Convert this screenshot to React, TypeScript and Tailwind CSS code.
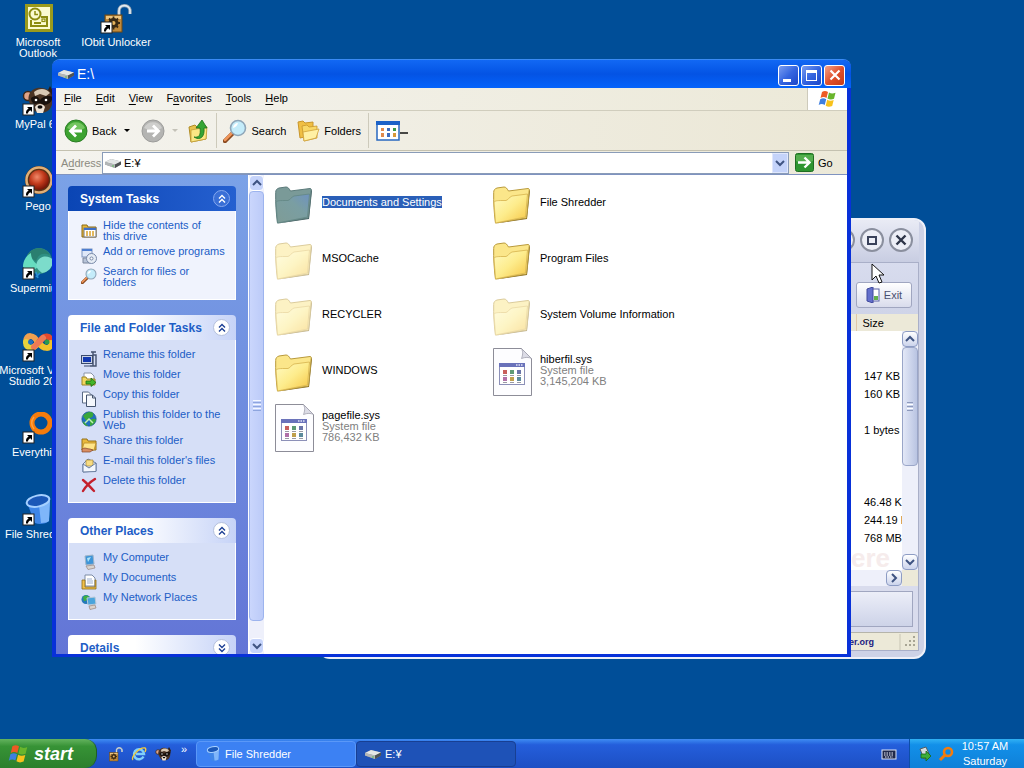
import type { ReactNode } from 'react';

/* ---------- desktop icons ---------- */

function ShortcutArrow() {
    return (
        <g>
            <rect x="1" y="20" width="11" height="11" fill="#fff" stroke="#222" strokeWidth="1" />
            <path d="M5 23h5v5l-1.7-1.7c-1.6 1-2.2 2-2.3 3.2H4c-.3-2.2.7-3.7 2.6-4.9z" fill="#000" />
        </g>
    );
}

function OutlookIcon() {
    return (
        <svg viewBox="0 0 32 32" className="w-8 h-8">
            <rect x="3" y="2" width="28" height="28" fill="#9a9a1c" />
            <rect x="6" y="5" width="22" height="22" fill="#fbfbd0" />
            <g fill="none" stroke="#8c8c10" strokeWidth="2">
                <circle cx="13" cy="12" r="5.5" />
                <path d="M13 9v3.5h3" strokeWidth="1.5" />
                <path d="M9 18v6h16v-9h-6" />
                <path d="M12 21h7" />
                <rect x="20" y="17" width="3" height="2.5" strokeWidth="1.2" />
            </g>
        </svg>
    );
}

function PadlockIcon({ shortcut = true, className = 'w-8 h-8' }: { shortcut?: boolean; className?: string }) {
    return (
        <svg viewBox="0 0 32 32" className={className}>
            <path d="M19 17V9c0-7 10-7 11-1v4" fill="none" stroke="#8fa0b0" strokeWidth="3.4" />
            <path d="M19 17V9c0-7 10-7 11-1v4" fill="none" stroke="#e4edf4" strokeWidth="1.6" />
            <rect x="5" y="13" width="17" height="17" fill="#c08a3c" stroke="#6c4712" />
            <path d="M6 14h15v3H6z" fill="#edc57e" />
            <circle cx="13.5" cy="21" r="5" fill="#3b2a14" />
            <path d="M13.5 14.5v13M7 21h13M9 16.5l9 9M18 16.5l-9 9" stroke="#3b2a14" strokeWidth="1.8" />
            <circle cx="13.5" cy="21" r="2" fill="#e7b35c" />
            {shortcut && <ShortcutArrow />}
        </svg>
    );
}

function RaccoonIcon({ shortcut = true, className = 'w-8 h-8' }: { shortcut?: boolean; className?: string }) {
    return (
        <svg viewBox="0 0 32 32" className={className}>
            <path d="M25 8l3-6 4 7-2 6z" fill="#2b1d14" />
            <circle cx="6" cy="12" r="4.500" fill="#e0a488" stroke="#3a271a" strokeWidth="1.5" />
            <path d="M7 11C10 3 19 2 26 6c6 4 6 15 1 20-5 4-13 4-16-1-2-4-6-8-4-14z" fill="#4b3424" />
            <path d="M12 8c5-4 12-4 16 1l-4 3-6-2-5 2z" fill="#d8c8b4" />
            <path d="M9 14c4-3 7-2 9 2 3-4 8-5 13-3-1 5-5 8-9 8l-4-2-5 1c-3-1-4-3-4-6z" fill="#19110d" />
            <circle cx="14" cy="16" r="1.300" fill="#fff" />
            <circle cx="24" cy="16" r="1.300" fill="#fff" />
            <path d="M13 23c2-4 8-4 10 0l-2 6h-6z" fill="#efe3d6" />
            <ellipse cx="18" cy="23" rx="2.500" ry="1.700" fill="#0e0a08" />
            {shortcut && <ShortcutArrow />}
        </svg>
    );
}

function PegoIcon() {
    return (
        <svg viewBox="0 0 32 32" className="w-8 h-8">
            <defs>
                <radialGradient id="pego" cx=".4" cy=".35" r=".7">
                    <stop offset="0" stopColor="#f08a6a" />
                    <stop offset=".5" stopColor="#c23a1c" />
                    <stop offset="1" stopColor="#6a0f05" />
                </radialGradient>
            </defs>
            <circle cx="17" cy="14" r="14" fill="#5b3216" />
            <circle cx="17" cy="14" r="12.500" fill="none" stroke="#e0b078" strokeWidth="2.500" />
            <circle cx="17" cy="14" r="10" fill="url(#pego)" />
            <ShortcutArrow />
        </svg>
    );
}

function SupermiumIcon() {
    return (
        <svg viewBox="0 0 32 32" className="w-8 h-8">
            <circle cx="17" cy="13" r="13" fill="#2f8f83" />
            <path d="M5 8C9-1 22-3 28 7c-8-3-12 0-14 6z" fill="#2a7f70" />
            <path d="M1 19C1 12 5 7 9 5c0 6 3 9 8 13-4 5-12 5-16 1z" fill="#66ddc0" />
            <path d="M15 14c4-8 13-6 16-2 0 8-5 12-11 13-4-3-7-6-5-11z" fill="#7cdccb" />
            <path d="M14 24l2 6M18 25l-4 4" stroke="#2c8fd0" strokeWidth="1.5" />
            <ShortcutArrow />
        </svg>
    );
}

function VisualStudioIcon() {
    return (
        <svg viewBox="0 0 32 32" className="w-8 h-8">
            <g fill="none" strokeLinecap="round" strokeWidth="6">
                <path d="M16 13C12 4 4 4 4 12" stroke="#f0a050" />
                <path d="M4 12c0 8 8 7 12 1" stroke="#e8d23c" />
                <path d="M17 12c5-8 12-7 12 1" stroke="#e64a2c" />
                <path d="M29 13c0 7-8 6-12 0" stroke="#f2c22a" />
                <path d="M12 17l9-9" stroke="#ef7a55" />
            </g>
            <circle cx="8.500" cy="12" r="2.500" fill="#1e6fc0" />
            <circle cx="25" cy="12" r="2.500" fill="#2f9a4a" />
            <ShortcutArrow />
        </svg>
    );
}

function EverythingIcon() {
    return (
        <svg viewBox="0 0 32 32" className="w-8 h-8">
            <circle cx="19" cy="11" r="9" fill="none" stroke="#f57c0c" strokeWidth="5" />
            <path d="M12 17a9 9 0 0 1 0-12" fill="none" stroke="#ffa040" strokeWidth="1.5" />
            <ShortcutArrow />
        </svg>
    );
}

function BinIcon({ shortcut = true, className = 'w-8 h-8' }: { shortcut?: boolean; className?: string }) {
    return (
        <svg viewBox="0 0 32 32" className={className}>
            <path d="M5 9l8 20c4 2 11 1 14-2L28 5z" fill="#3f86e8" />
            <path d="M17 11l2 18c4 0 7-1 8-2L28 7z" fill="#7fb6fa" />
            <ellipse cx="16" cy="7" rx="11.500" ry="5.500" transform="rotate(-12 16 7)" fill="#1b58b8" stroke="#a6d0ff" strokeWidth="2" />
            {shortcut && <ShortcutArrow />}
        </svg>
    );
}

/* ---------- small shared icons ---------- */

function DriveIcon() {
    return (
        <svg viewBox="0 0 16 16" className="w-4 h-4 shrink-0">
            <path d="M0 7l6-3 10 2.500v3L10 13 0 9.500z" fill="#8b8f92" />
            <path d="M0 7l6-3 10 2.500-6 3z" fill="#e3e6e6" />
            <path d="M0 7l10 2.500V13L0 9.500z" fill="#b3b7b8" />
            <path d="M10 9.500l6-3v3L10 13z" fill="#4e5254" />
            <circle cx="8" cy="11" r=".8" fill="#4fc04a" />
        </svg>
    );
}

function WindowsFlag({ className }: { className: string }) {
    return (
        <svg viewBox="0 0 20 20" className={className}>
            <path d="M4 3c2-1.3 4-1.2 6 0L8.500 9c-2-1.2-4-1.2-6 0z" fill="#ee5a24" />
            <path d="M11 3.500c2 1.2 4 1.3 6.500.2L16 9.700c-2.200 1-4.400 1-6.500-.2z" fill="#69b52c" />
            <path d="M2.200 10.200c2-1.2 4-1.2 6 0L6.700 16c-2-1.2-4-1.2-6 .1z" fill="#3f7fe0" />
            <path d="M9.200 10.700c2 1.200 4.300 1.200 6.500.2l-1.500 6c-2.300 1-4.500 1-6.500-.2z" fill="#f8c21c" />
        </svg>
    );
}

function MagnifierIcon({ className }: { className: string }) {
    return (
        <svg viewBox="0 0 24 24" className={className}>
            <path d="M2 22l8-8" stroke="#8a4a20" strokeWidth="4.500" strokeLinecap="round" />
            <path d="M2 21l7-7" stroke="#f0965a" strokeWidth="2.500" strokeLinecap="round" />
            <circle cx="15" cy="9" r="7.500" fill="#c4ecfa" stroke="#8fa6b8" strokeWidth="1.600" />
            <path d="M10 9a5 5 0 0 1 5-5c-1 3-2 4-5 5z" fill="#fff" />
        </svg>
    );
}

function Chevron({ dir, className = 'w-2.5 h-2.5' }: { dir: 'up' | 'down' | 'right'; className?: string }) {
    const d = dir === 'up' ? 'M1 7l4-4 4 4' : dir === 'down' ? 'M1 3l4 4 4-4' : 'M3 1l4 4-4 4';
    return (
        <svg viewBox="0 0 10 10" className={className}>
            <path d={d} fill="none" stroke="#3f5482" strokeWidth="2" />
        </svg>
    );
}

/* ---------- task pane icons ---------- */

const taskIcons: Record<string, ReactNode> = {
    hide: (
        <>
            <path d="M1 3h5l1 2h8v10H1z" fill="#e8b83a" stroke="#8a6a14" />
            <rect x="3" y="6" width="12" height="9" fill="#fff" stroke="#777" />
            <path d="M3 6h12v2H3z" fill="#3f6fc8" />
            <path d="M6 9v5M9 9v5M12 9v5" stroke="#d8a028" strokeWidth="1.500" />
        </>
    ),
    programs: (
        <>
            <rect x="1" y="1" width="10" height="8" fill="#dfe8f8" stroke="#7b93bd" />
            <path d="M1 1h10v2H1z" fill="#4f7fd0" />
            <path d="M2 10h7v5H2z" fill="#b8c4d8" stroke="#7a869c" />
            <circle cx="10.500" cy="10.500" r="5" fill="#e6ecf4" stroke="#7889a8" />
            <circle cx="10.500" cy="10.500" r="1.500" fill="#fff" stroke="#7889a8" />
        </>
    ),
    rename: (
        <>
            <rect x=".5" y="4.500" width="11" height="8" fill="#c9d2e4" stroke="#39496b" />
            <rect x="2" y="6" width="8" height="5" fill="#1238b0" />
            <path d="M9 15h6V4h-3V1M15 1h-5M12 4v11" fill="none" stroke="#44526e" strokeWidth="1.400" />
            <path d="M3 15h6" stroke="#39496b" />
        </>
    ),
    move: (
        <>
            <path d="M3 2h7l3 3v7H3z" fill="#fff" stroke="#8a94a6" />
            <path d="M1 6h4l1 2h8v6H1z" fill="#f3d75e" stroke="#9c8424" />
            <path d="M5 10h5V7l5 4.500-5 4V13H5z" fill="#43b52a" stroke="#1b6c10" strokeWidth=".8" />
        </>
    ),
    copy: (
        <>
            <path d="M1.500 1h6l3 3v8h-9z" fill="#fff" stroke="#5b6b84" />
            <path d="M5.500 4h6l3 3v8.500h-9z" fill="#f4f7fc" stroke="#45546e" />
            <path d="M11.500 4v3h3" fill="none" stroke="#45546e" />
        </>
    ),
    publish: (
        <>
            <circle cx="8" cy="8" r="7.200" fill="#1f6ec0" stroke="#16507a" strokeWidth=".6" />
            <path d="M2 5c3-4 8-5 10-3 1 3-1 5-4 5-1 3-3 3-4 1zM9 9c3-2 6-1 6 0-1 3-3 5-6 6zM2 10l5 5c-3 0-5-2-5-5z" fill="#3aa63a" />
            <path d="M4 12l4-4 4 4" fill="none" stroke="#bff0b0" strokeWidth="1.500" />
        </>
    ),
    share: (
        <>
            <path d="M1 2h5l1 2h8v9H1z" fill="#e9b93c" stroke="#94701a" />
            <path d="M3 6h12l-2 7H1z" fill="#ffe588" stroke="#b88a24" strokeWidth=".8" />
            <path d="M1 12c3-2 5 0 8 0l3 1-3 2H1z" fill="#d98e62" stroke="#7e4428" strokeWidth=".7" />
        </>
    ),
    mail: (
        <>
            <path d="M2 7l5-5 8 4v8l-13 1z" fill="#dfe8f4" stroke="#6b7fa0" />
            <path d="M5 3h7v6H5z" fill="#f8dc82" stroke="#a08438" strokeWidth=".7" />
            <path d="M2 7l6 4 7-5v8.500L2 15z" fill="#f3f7fd" stroke="#6b7fa0" />
        </>
    ),
    delete: (
        <path d="M2 3c4 3 7 7 11 11M14 2C9 5 5 9 2 14" fill="none" stroke="#c4202c" strokeWidth="2.400" strokeLinecap="round" />
    ),
    computer: (
        <>
            <path d="M4 2l8-1 1 9-8 1z" fill="#3d94d8" stroke="#9fb4c8" />
            <path d="M6 4l4-1-3 5z" fill="#aee4f8" />
            <path d="M5 12l8-1 1 3-7 1.500z" fill="#d8d4d0" stroke="#95857f" strokeWidth=".7" />
        </>
    ),
    documents: (
        <>
            <path d="M4 1h7l3 3v8H4z" fill="#fff" stroke="#7d8ca6" />
            <path d="M1 6h3v7h10V6h1v9H1z" fill="#f1c04a" stroke="#8d6d18" strokeWidth=".8" />
            <path d="M6 5h5M6 7h6M6 9h6" stroke="#9db0d0" />
        </>
    ),
    network: (
        <>
            <circle cx="5" cy="5.500" r="4.500" fill="#2579b8" />
            <path d="M2 3c2-2 5-2 6 0 0 2-3 4-5 4z" fill="#3faf43" />
            <path d="M6 4l8-1 1 7-8 1z" fill="#4aa4dc" stroke="#b6c8d8" />
            <path d="M8 12l6-1 1 3-6 1.500z" fill="#dcd3cc" stroke="#97857d" strokeWidth=".7" />
        </>
    ),
};

function TaskIcon({ name }: { name: string }) {
    if (name === 'search') return <MagnifierIcon className="w-4 h-4 mt-0.5 -mb-0.5 shrink-0" />;
    return <svg viewBox="0 0 16 16" className="w-4 h-4 mt-0.5 -mb-0.5 shrink-0">{taskIcons[name]}</svg>;
}

/* ---------- data ---------- */

const desktopItems = [
    { lines: ['Microsoft', 'Outlook'], icon: <OutlookIcon /> },
    { lines: ['MyPal 68'], icon: <RaccoonIcon /> },
    { lines: ['Pego'], icon: <PegoIcon /> },
    { lines: ['Supermium'], icon: <SupermiumIcon /> },
    { lines: ['Microsoft Visual', 'Studio 2008'], icon: <VisualStudioIcon /> },
    { lines: ['Everything'], icon: <EverythingIcon /> },
    { lines: ['File Shredder'], icon: <BinIcon /> },
];

const menus = ['File', 'Edit', 'View', 'Favorites', 'Tools', 'Help'];
const menuKeys = [0, 0, 0, 1, 0, 0];

const systemTasks = [
    { icon: 'hide', label: 'Hide the contents of\nthis drive' },
    { icon: 'programs', label: 'Add or remove programs' },
    { icon: 'search', label: 'Search for files or\nfolders' },
];

const folderTasks = [
    { icon: 'rename', label: 'Rename this folder' },
    { icon: 'move', label: 'Move this folder' },
    { icon: 'copy', label: 'Copy this folder' },
    { icon: 'publish', label: 'Publish this folder to the\nWeb' },
    { icon: 'share', label: 'Share this folder' },
    { icon: 'mail', label: "E-mail this folder's files" },
    { icon: 'delete', label: 'Delete this folder' },
];

const places = [
    { icon: 'computer', label: 'My Computer' },
    { icon: 'documents', label: 'My Documents' },
    { icon: 'network', label: 'My Network Places' },
];

interface Entry {
    name: string;
    kind: 'folder' | 'hidden' | 'selected' | 'file';
    size?: string;
}

const entries: Entry[] = [
    { name: 'Documents and Settings', kind: 'selected' },
    { name: 'File Shredder', kind: 'folder' },
    { name: 'MSOCache', kind: 'hidden' },
    { name: 'Program Files', kind: 'folder' },
    { name: 'RECYCLER', kind: 'hidden' },
    { name: 'System Volume Information', kind: 'hidden' },
    { name: 'WINDOWS', kind: 'folder' },
    { name: 'hiberfil.sys', kind: 'file', size: '3,145,204 KB' },
    { name: 'pagefile.sys', kind: 'file', size: '786,432 KB' },
];

const sizes = ['', '', '147 KB', '160 KB', '', '1 bytes', '', '', '', '46.48 KB', '244.19 KB', '768 MB'];

/* ---------- pieces ---------- */

function DesktopIcon({ lines, icon }: { lines: string[]; icon: ReactNode }) {
    return (
        <button className="w-[76px] h-[82px] pt-0.5 flex flex-col items-center text-white text-[11px] leading-[11px]">
            {icon}
            <span className="mt-[3px] whitespace-nowrap">
                {lines.map((line) => (
                    <span key={line} className="block">{line}</span>
                ))}
            </span>
        </button>
    );
}

function FolderIcon({ kind }: { kind: Entry['kind'] }) {
    const selected = kind === 'selected';
    return (
        <svg viewBox="0 0 40 48" className={`w-10 h-12 shrink-0 ${kind === 'hidden' ? 'opacity-50' : ''}`}>
            <defs>
                <linearGradient id="folderFront" x1="0" y1="0" x2="1" y2="1">
                    <stop offset="0" stopColor="#fffbc4" />
                    <stop offset=".5" stopColor="#fdec8c" />
                    <stop offset="1" stopColor="#f6c544" />
                </linearGradient>
                <linearGradient id="folderSelected" x1="0" y1="1" x2="1" y2="0">
                    <stop offset="0" stopColor="#7f9c96" />
                    <stop offset=".6" stopColor="#7a9ea2" />
                    <stop offset="1" stopColor="#6f93c0" />
                </linearGradient>
            </defs>
            <path d="M3 43.5l31-4.500L37 11l-1-2-3 28z" fill={selected ? '#3f5a5c' : '#7d6420'} />
            <path d="M.7 12.500C.7 10 1.500 9 4 8l7-1c2 0 3 1.500 4.500 4L35 8.500c1 0 1.300.5 1.200 2L33.500 38l-31 5C1 32 .5 22 .7 12.500z" fill={selected ? '#7a9a98' : '#fbe68a'} stroke={selected ? '#5b7a7a' : '#b99a3c'} />
            <path d="M1 22c2-1.500 3-1.500 12-1.500 3-1 3-3.500 6-4.500l15.500-2L32.500 37l-30 6z" fill={selected ? 'url(#folderSelected)' : 'url(#folderFront)'} stroke={selected ? '#628784' : '#d6b24c'} strokeWidth=".8" />
        </svg>
    );
}

function SystemFileIcon() {
    const dots = ['#c8605c', '#5f9a74', '#6a74a8', '#b070a8', '#c0a04c', '#5c8a9c'];
    return (
        <svg viewBox="0 0 40 48" className="w-10 h-12 shrink-0">
            <path d="M.5 .5h28l10 10v37h-38z" fill="#fdfdff" stroke="#8d8d98" />
            <path d="M28.500 .5c2 4 1 7 0 10 4-1.500 7-1.500 10 0z" fill="#dcdce6" stroke="#a2a2ae" strokeWidth=".8" />
            <rect x="6.500" y="15.500" width="25" height="21" fill="#fff" stroke="#8c90b8" />
            <path d="M6 15h26v4H6z" fill="#6a72ba" />
            <path d="M23 17h7" stroke="#e2e4f8" strokeDasharray="1.500 1" strokeWidth="1.500" />
            {dots.map((fill, i) => (
                <rect key={fill} x={10 + (i % 3) * 7} y={i < 3 ? 22 : 29} width="4" height="4" fill={fill} />
            ))}
            <path d="M10 27.500h18M10 34.500h18" stroke="#9a9aa4" strokeDasharray="4 3" />
        </svg>
    );
}

function FileEntry({ entry }: { entry: Entry }) {
    return (
        <button className="h-14 pb-0.5 flex items-center text-left gap-[7px]">
            <span className="pt-1">
                {entry.kind === 'file' ? <SystemFileIcon /> : <FolderIcon kind={entry.kind} />}
            </span>
            <span className="leading-[11px] whitespace-nowrap">
                <span className={entry.kind === 'selected' ? 'bg-[#2a5fb8] text-white' : 'text-black'}>
                    {entry.name}
                </span>
                {entry.size && (
                    <span className="block text-[#808080]">
                        System file<br />{entry.size}
                    </span>
                )}
            </span>
        </button>
    );
}

function TaskGroup({ title, items, primary, collapsed }: { title: string; items?: { icon: string; label: string }[]; primary?: boolean; collapsed?: boolean }) {
    return (
        <section className="shrink-0">
            <h2 className={`h-[25px] pl-3 pr-1.5 flex items-center justify-between rounded-t text-xs font-bold ${primary ? 'bg-linear-to-r from-[#0a45b4] to-[#2560d0] text-white' : 'bg-linear-to-r from-white from-40% to-[#c6d3f7] text-[#215dc6]'}`}>
                {title}
                <button aria-label={`Toggle ${title}`} className={`w-[17px] h-[17px] rounded-full flex items-center justify-center border ${primary ? 'bg-[#3a6fd6] border-[#86a8ee]' : 'bg-white border-[#b4c0dc]'}`}>
                    <svg viewBox="0 0 10 10" className={`w-2.5 h-2.5 ${collapsed ? 'rotate-180' : ''}`}>
                        <path d="M2 4.500l3-3 3 3M2 8.500l3-3 3 3" fill="none" stroke={primary ? '#fff' : '#1c3f94'} strokeWidth="1.400" />
                    </svg>
                </button>
            </h2>
            {items && (
                <ul className={`pt-[9px] pb-[11px] pl-3 flex flex-col gap-1 border border-t-0 border-white ${primary ? 'bg-[#f0f3fd]' : 'bg-[#d6dff7]'}`}>
                    {items.map((item) => (
                        <li key={item.label} className="min-h-4">
                            <a href="#" className="flex gap-1.5 text-[#215dc6] leading-[11px] whitespace-pre">
                                <TaskIcon name={item.icon} />
                                {item.label}
                            </a>
                        </li>
                    ))}
                </ul>
            )}
        </section>
    );
}

function Scrollbar() {
    return (
        <div className="w-[17px] shrink-0 flex flex-col bg-[#eef0fb] border-x border-white">
            <button aria-label="Scroll up" className="h-4 flex items-center justify-center rounded-sm bg-[#c6d4fb] border border-white">
                <Chevron dir="up" />
            </button>
            <div className="flex-1 flex flex-col">
                <div className="grow-[429] flex flex-col items-center justify-center gap-px rounded-sm border border-[#9db4ee] bg-linear-to-r from-[#cad6fc] to-[#bccbf8]">
                    <span className="w-2 h-px bg-[#f4f7ff]" />
                    <span className="w-2 h-px bg-[#8ea5de]" />
                    <span className="w-2 h-px bg-[#f4f7ff]" />
                    <span className="w-2 h-px bg-[#8ea5de]" />
                    <span className="w-2 h-px bg-[#f4f7ff]" />
                    <span className="w-2 h-px bg-[#8ea5de]" />
                </div>
                <div className="grow-[18]" />
            </div>
            <button aria-label="Scroll down" className="h-4 flex items-center justify-center rounded-sm bg-[#c6d4fb] border border-white">
                <Chevron dir="down" />
            </button>
        </div>
    );
}

function ToolbarDivider() {
    return <span className="w-px self-stretch my-0.5 bg-[#cdcabb]" />;
}

function ExplorerWindow() {
    return (
        <div className="absolute left-[52px] right-[173px] top-[59px] bottom-[82px] flex flex-col rounded-t-lg overflow-hidden bg-[#0831d9] px-1 pb-[3px] border-t border-[#3a8bf5]">
            {/* Title bar */}
            <header className="h-7 -mx-1 px-1.5 flex items-center bg-linear-to-b from-[#1268f4] via-[#0453e4] to-[#0463fb] shrink-0">
                <DriveIcon />
                <h1 className="ml-[3px] flex-1 text-white text-[14px] leading-5">E:\</h1>
                <div className="flex gap-0.5 pt-0.5">
                    <button aria-label="Minimize" className="w-[21px] h-[21px] rounded-[3px] border border-white bg-linear-to-br from-[#7a9cf0] via-[#3565e0] to-[#1c46c8] flex items-end px-1 pb-[3px]">
                        <span className="w-2 h-[3px] bg-white" />
                    </button>
                    <button aria-label="Maximize" className="w-[21px] h-[21px] rounded-[3px] border border-white bg-linear-to-br from-[#7a9cf0] via-[#3565e0] to-[#1c46c8] flex items-center justify-center">
                        <span className="w-[11px] h-[11px] border border-t-[3px] border-white" />
                    </button>
                    <button aria-label="Close" className="w-[21px] h-[21px] rounded-[3px] border border-white bg-linear-to-br from-[#f0a088] via-[#e0502c] to-[#c43a14] flex items-center justify-center">
                        <svg viewBox="0 0 12 12" className="w-3 h-3">
                            <path d="M1.500 1.500l9 9M10.500 1.500l-9 9" stroke="#fff" strokeWidth="2.200" />
                        </svg>
                    </button>
                </div>
            </header>

            {/* Menu bar */}
            <nav className="h-[23px] shrink-0 flex bg-linear-to-r from-[#f4f3ee] to-[#ece9d8] border-b border-[#d0cdbd]">
                <div className="flex-1 flex items-center gap-3.5 pl-2 pb-0.5">
                    {menus.map((menu, i) => (
                        <button key={menu}>
                            {menu.slice(0, menuKeys[i])}
                            <span className="underline underline-offset-2">{menu[menuKeys[i]]}</span>
                            {menu.slice(menuKeys[i] + 1)}
                        </button>
                    ))}
                </div>
                <div className="w-10 bg-white border-l border-[#cdcabb] flex items-center justify-center">
                    <WindowsFlag className="w-5 h-5" />
                </div>
            </nav>

            {/* Toolbar */}
            <div className="h-10 shrink-0 flex items-center pl-2 bg-linear-to-r from-[#f4f3ee] to-[#ebe7d5] border-b border-[#c4c1b0]">
                <button className="flex items-center gap-1">
                    <svg viewBox="0 0 24 24" className="w-6 h-6">
                        <circle cx="12" cy="12" r="11" fill="#3da331" stroke="#2b7d25" />
                        <path d="M3 9a10 10 0 0 1 18 0c-5 3-12 3-18 0z" fill="#8ad374" opacity=".7" />
                        <path d="M18 12H7M12 6.500L6.500 12l5.500 5.500" fill="none" stroke="#fff" strokeWidth="2.800" />
                    </svg>
                    Back
                    <span className="ml-1 border-x-[3px] border-x-transparent border-t-[3px] border-t-black" />
                </button>
                <button aria-label="Forward" className="ml-[11px] flex items-center gap-[7px]">
                    <svg viewBox="0 0 24 24" className="w-6 h-6">
                        <circle cx="12" cy="12" r="11" fill="#b4b4b2" stroke="#9c9c9a" />
                        <path d="M3 9a10 10 0 0 1 18 0c-5 3-12 3-18 0z" fill="#d4d4d2" opacity=".8" />
                        <path d="M6 12h11M12 6.500l5.500 5.500-5.500 5.500" fill="none" stroke="#fff" strokeWidth="2.800" />
                    </svg>
                    <span className="border-x-[3px] border-x-transparent border-t-[3px] border-t-[#c4c2b8]" />
                </button>
                <button aria-label="Up" className="ml-2 mr-1.5">
                    <svg viewBox="0 0 24 24" className="w-6 h-6">
                        <path d="M3 8l6-2 2 2 9-1v13L5 23z" fill="#e9c24c" stroke="#b08c24" />
                        <path d="M5 11l16-3-1 12L5 23z" fill="#fbe784" stroke="#c4a038" strokeWidth=".8" />
                        <path d="M8 18c5 1 7-2 6-9h-4l6-8 5 8h-3c1 9-4 13-10 9z" fill="#35a535" stroke="#1c701c" strokeWidth=".8" />
                    </svg>
                </button>
                <ToolbarDivider />
                <button className="ml-1.5 flex items-center gap-1">
                    <MagnifierIcon className="w-6 h-6" />
                    Search
                </button>
                <button className="ml-2.5 flex items-center gap-1">
                    <svg viewBox="0 0 24 24" className="w-6 h-6">
                        <path d="M2 3l5-1 2 2 8-1v13L4 19z" fill="#f0bf44" stroke="#c8962c" />
                        <path d="M6 7l5-1 2 2 8-1v12L8 22z" fill="#f8d868" stroke="#c8962c" strokeWidth=".8" />
                        <path d="M7 13l16-3-3 9L8 22z" fill="#fff0a4" stroke="#d0a23a" strokeWidth=".8" />
                    </svg>
                    Folders
                </button>
                <span className="w-[7px]" />
                <ToolbarDivider />
                <button aria-label="Views" className="ml-[7px]">
                    <svg viewBox="0 0 34 22" className="w-[34px] h-[22px]">
                        <rect x="1" y="2" width="22" height="18" fill="#fff" stroke="#2868c0" strokeWidth="1.500" />
                        <path d="M0 1h24v4H0z" fill="#1c62c8" />
                        <path d="M5 8h3v3H5zM5 13h3v4H5z" fill="#e08a4c" />
                        <path d="M11 8h3v3h-3zM11 13h3v4h-3z" fill="#3c6cc0" />
                        <path d="M17 8h3v3h-3z" fill="#3a9a4a" />
                        <path d="M17 13h3v4h-3z" fill="#d89838" />
                        <path d="M24 13h8" stroke="#111" strokeWidth="1.500" />
                    </svg>
                </button>
            </div>

            {/* Address bar */}
            <div className="h-[23px] shrink-0 flex items-center pl-[5px] bg-linear-to-r from-[#f4f3ee] to-[#ece9d8]">
                <label htmlFor="address" className="w-[41px] text-[#8b8a80]">A<span className="underline underline-offset-2">d</span>dress</label>
                <div className="flex-1 h-[22px] pl-0.5 flex items-center gap-[3px] bg-white border border-[#8a9cb8]">
                    <DriveIcon />
                    <input id="address" type="text" defaultValue="E:¥" className="flex-1 min-w-0 bg-transparent outline-none" />
                    <button aria-label="Address history" className="w-4 h-5 flex items-center justify-center bg-[#c4d3fa] border border-[#dfe7fd]">
                        <Chevron dir="down" />
                    </button>
                </div>
                <button className="w-[58px] pl-1.5 flex items-center gap-1">
                    <svg viewBox="0 0 19 19" className="w-[19px] h-[19px]">
                        <rect x=".5" y=".5" width="18" height="18" rx="2" fill="#2e9530" stroke="#1f6e22" />
                        <path d="M1 2h17v6c-6 2-11 2-17 0z" fill="#6fbf64" opacity=".6" />
                        <path d="M3 9.500h11M9.500 4.500l5 5-5 5" fill="none" stroke="#fff" strokeWidth="2.400" />
                    </svg>
                    Go
                </button>
            </div>

            <div className="flex-1 min-h-0 flex border-t border-[#7f93c0] bg-white">
                <aside className="w-48 shrink-0 overflow-hidden px-3 pt-[11px] flex flex-col gap-[15px] bg-linear-to-b from-[#7ba2e7] to-[#6375d6]">
                    <TaskGroup title="System Tasks" items={systemTasks} primary />
                    <TaskGroup title="File and Folder Tasks" items={folderTasks} />
                    <TaskGroup title="Other Places" items={places} />
                    <TaskGroup title="Details" collapsed />
                </aside>
                <Scrollbar />
                <main className="flex-1 pl-2.5 grid grid-cols-[repeat(auto-fill,218px)] auto-rows-[56px]">
                    {entries.map((entry) => (
                        <FileEntry key={entry.name} entry={entry} />
                    ))}
                </main>
            </div>
        </div>
    );
}

function ShredderWindow() {
    return (
        <div className="absolute left-[318px] right-[98px] top-[218px] bottom-[80px] flex flex-col rounded-xl overflow-hidden border-2 border-[#eef0f8] bg-[#cdd2e6] pr-[5px] pb-1.5">
            <header className="h-[42px] shrink-0 flex items-center justify-end gap-[5px] pr-1.5 pb-0.5 bg-linear-to-b from-[#e9ebf5] to-[#c8cde2]">
                <button aria-label="Minimize" className="w-6 h-6 rounded-full border-2 border-[#8a8f9e] bg-[#eceef6] flex items-center justify-center">
                    <span className="w-2 h-0.5 bg-[#333a4a]" />
                </button>
                <button aria-label="Maximize" className="w-6 h-6 rounded-full border-2 border-[#8a8f9e] bg-[#eceef6] flex items-center justify-center">
                    <span className="w-2.5 h-[9px] border-2 border-[#39415a]" />
                </button>
                <button aria-label="Close" className="w-6 h-6 rounded-full border-2 border-[#8a8f9e] bg-[#eceef6] flex items-center justify-center">
                    <svg viewBox="0 0 12 12" className="w-3 h-3">
                        <path d="M1.500 1.500l9 9M10.500 1.500l-9 9" stroke="#2e3548" strokeWidth="2.400" />
                    </svg>
                </button>
            </header>
            <div className="flex-1 min-h-0 flex flex-col border border-[#a9afc8] bg-[#d9dced]">
                <div className="h-[51px] shrink-0 flex items-end justify-end pr-1.5 pb-1.5 bg-linear-to-b from-[#d8dcee] to-[#cfd4e8]">
                    <button className="w-14 h-[26px] flex items-center justify-center gap-1 rounded-[3px] border border-[#a0a6c0] bg-linear-to-b from-white to-[#d9dcec] text-[#4a5070]">
                        <svg viewBox="0 0 14 16" className="w-3.5 h-4">
                            <rect x="5" y="2" width="8" height="12" fill="#fff" stroke="#5a62a8" />
                            <path d="M1 2l6-2v16l-6-2z" fill="#6470cc" stroke="#3f489c" />
                            <path d="M8 9h4v4H8z" fill="#62b04c" />
                        </svg>
                        Exit
                    </button>
                </div>
                <div className="flex-1 min-h-0 flex bg-white">
                    <div className="flex-1 min-w-0 flex flex-col">
                        <div className="flex-1 min-h-0 overflow-hidden relative">
                            <span className="absolute right-3 bottom-0 text-[26px] leading-6 font-bold text-[#f6ecec]">here</span>
                            <table className="relative w-full table-fixed text-left">
                                <thead>
                                    <tr className="h-[17px] bg-[#ece9d8]">
                                        <th />
                                        <th className="w-[46px] font-normal border-l border-[#e0c8a8] pl-1.5">Size</th>
                                    </tr>
                                </thead>
                                <tbody>
                                    {sizes.map((size, i) => (
                                        <tr key={i} className="h-[18px]">
                                            <td />
                                            <td className="pl-2 whitespace-nowrap overflow-hidden">{size}</td>
                                        </tr>
                                    ))}
                                </tbody>
                            </table>
                        </div>
                        <div className="h-4 flex justify-end bg-[#eef0fa]">
                            <button aria-label="Scroll right" className="w-4 h-4 flex items-center justify-center rounded-sm border border-[#8d9cc4] bg-linear-to-b from-white to-[#ccd4ec]">
                                <Chevron dir="right" />
                            </button>
                        </div>
                    </div>
                    <div className="w-4 shrink-0 flex flex-col bg-[#eef0fa]">
                        <div className="h-[17px] bg-[#ece9d8]" />
                        <button aria-label="Scroll up" className="h-4 flex items-center justify-center rounded-sm border border-[#8d9cc4] bg-linear-to-b from-white to-[#ccd4ec]">
                            <Chevron dir="up" />
                        </button>
                        <div className="grow-[115] flex flex-col items-center justify-center gap-px rounded-sm border border-[#9aa6c8] bg-linear-to-r from-[#e3e8f7] to-[#b9c4e2]">
                            <span className="w-1.5 h-px bg-[#8d99bb]" />
                            <span className="w-1.5 h-px bg-white" />
                            <span className="w-1.5 h-px bg-[#8d99bb]" />
                            <span className="w-1.5 h-px bg-white" />
                            <span className="w-1.5 h-px bg-[#8d99bb]" />
                        </div>
                        <div className="grow-[94]" />
                        <button aria-label="Scroll down" className="h-4 flex items-center justify-center rounded-sm border border-[#8d9cc4] bg-linear-to-b from-white to-[#ccd4ec]">
                            <Chevron dir="down" />
                        </button>
                        <div className="h-4 bg-[#ece9d8]" />
                    </div>
                </div>
                <div className="h-[46px] shrink-0 py-[5px] pr-[5px]">
                    <div className="h-full border border-[#a0a6c0] bg-linear-to-b from-[#eceef8] to-[#cdd3e8]" />
                </div>
                <footer className="h-[18px] shrink-0 flex items-center bg-[#ece9d8] border-t border-[#b5b4aa]">
                    <a href="#" className="flex-1 text-right pr-3 text-[#1a1a80] text-[9px] font-bold">www.fileshredder.org</a>
                    <svg viewBox="0 0 32 16" className="w-8 h-4">
                        <path d="M14 0v16" stroke="#c8c5b4" />
                        <path d="M27 3h2M23 7h2M27 7h2M19 11h2M23 11h2M27 11h2" stroke="#a8a594" strokeWidth="2" />
                    </svg>
                </footer>
            </div>
        </div>
    );
}

function Taskbar() {
    return (
        <footer className="h-[29px] shrink-0 flex items-center bg-linear-to-b from-[#3f8cf3] via-[#245edb] via-20% to-[#1d4fc4] text-white">
            <button className="w-[97px] h-full pl-2 flex items-center gap-1 rounded-r-xl bg-linear-to-b from-[#63b35e] via-[#379336] via-25% to-[#2c7f2c] border-r border-[#1f5f24]">
                <WindowsFlag className="w-[22px] h-[22px]" />
                <span className="text-[18px] leading-5 font-bold italic">start</span>
            </button>
            <div className="flex items-center gap-2 ml-2.5 w-[88px] shrink-0">
                <PadlockIcon shortcut={false} className="w-4 h-4" />
                <svg viewBox="0 0 16 16" className="w-4 h-4">
                    <path d="M12.500 10.500A5 5 0 1 1 13 8H5" fill="none" stroke="#7fd0fb" strokeWidth="2.500" />
                    <path d="M2 14C-1 12 8 1 14 2c1 0 1 2 0 4" fill="none" stroke="#f4cc3c" strokeWidth="1.400" />
                </svg>
                <RaccoonIcon shortcut={false} className="w-4 h-4" />
                <button aria-label="More quick launch items" className="ml-0.5 mb-2.5">»</button>
            </div>
            <button className="ml-px w-40 h-[26px] pl-2 flex items-center gap-1 rounded-sm bg-[#3c81f3] border border-[#5a98f8]">
                <BinIcon shortcut={false} className="w-4 h-4" />
                File Shredder
            </button>
            <button className="w-40 h-[26px] pl-2 flex items-center gap-1 rounded-sm bg-[#1e52b7] border border-[#183f92]">
                <DriveIcon />
                E:¥
            </button>
            <div className="flex-1 flex justify-end pr-3">
                <svg viewBox="0 0 16 12" className="w-4 h-3">
                    <rect x="1" y="2" width="14" height="9" fill="#20294a" stroke="#dfe6f6" />
                    <path d="M3 5h10M3 7h10M4 9h8" stroke="#eef2fb" strokeDasharray="1.500 1" />
                </svg>
            </div>
            <div className="h-full w-[115px] pl-2 flex items-center gap-1 bg-linear-to-b from-[#30b1f4] via-[#1290e9] via-20% to-[#0f80d8] border-l border-[#0c4fa8]">
                <svg viewBox="0 0 16 16" className="w-4 h-4">
                    <path d="M2 3l6-2 4 9-6 3z" fill="#d6dcde" stroke="#525c62" />
                    <path d="M3 8h5V5l5 5-5 5v-3H3z" fill="#3cae38" stroke="#186818" strokeWidth=".8" />
                </svg>
                <svg viewBox="0 0 16 16" className="w-4 h-4">
                    <circle cx="10" cy="6" r="4" fill="none" stroke="#f57c0c" strokeWidth="2.600" />
                    <path d="M7 9l-5 5" stroke="#f57c0c" strokeWidth="3" />
                </svg>
                <time className="flex-1 text-center leading-[15px] pr-3">10:57 AM<br />Saturday</time>
            </div>
        </footer>
    );
}

export default function App() {
    return (
        <div className="h-screen flex flex-col overflow-hidden bg-[#004e98] text-[11px] leading-[14px] text-black font-['Liberation_Sans',Arial,sans-serif]">
            <div className="flex-1 min-h-0 relative overflow-hidden">
                <div className="flex items-start">
                    <div className="flex flex-col">
                        {desktopItems.map((item) => (
                            <DesktopIcon key={item.lines.join(' ')} {...item} />
                        ))}
                    </div>
                    <div className="ml-0.5">
                        <DesktopIcon lines={['IObit Unlocker']} icon={<PadlockIcon />} />
                    </div>
                </div>
                <ShredderWindow />
                <ExplorerWindow />
                <svg viewBox="0 0 14 22" className="absolute left-[871px] top-[263px] w-3.5 h-[22px]">
                    <path d="M1 1v16l4-4 3 7 3-1-3-7h5z" fill="#fff" stroke="#111" />
                </svg>
            </div>
            <Taskbar />
        </div>
    );
}
